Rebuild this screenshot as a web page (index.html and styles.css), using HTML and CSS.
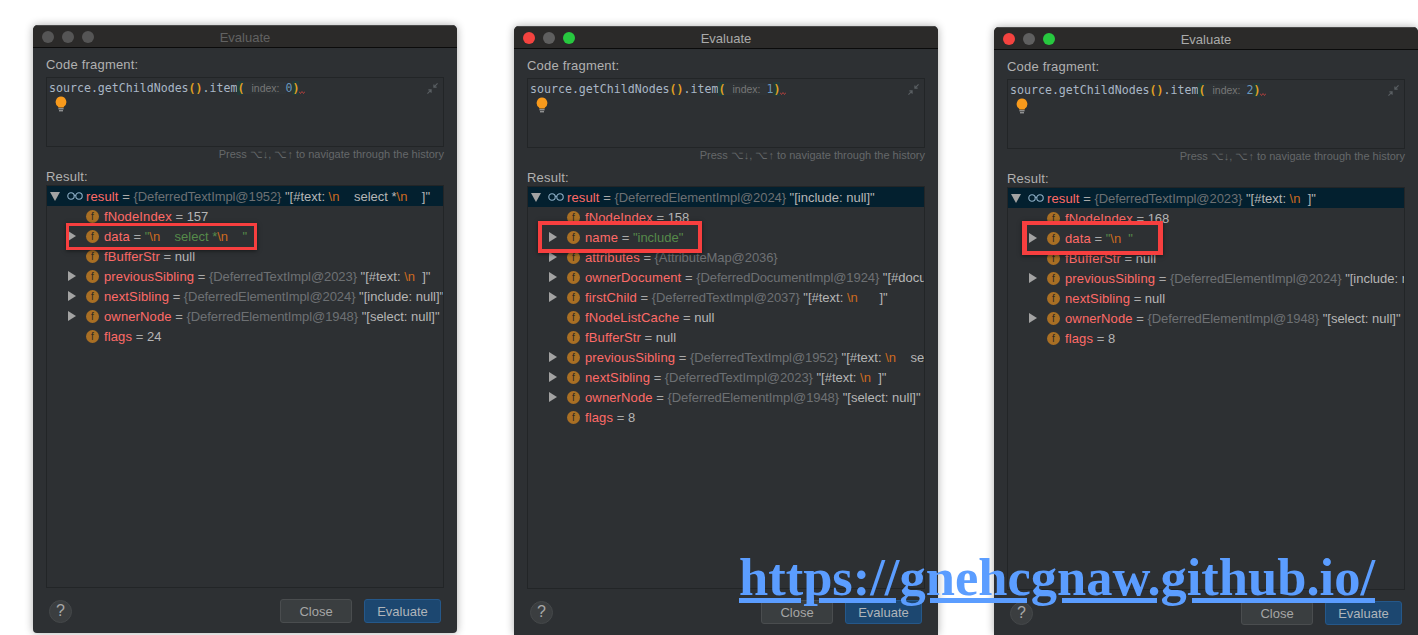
FILE: index.html
```html
<!DOCTYPE html>
<html lang="en">
<head>
<meta charset="utf-8">
<title>Evaluate</title>
<link rel="stylesheet" href="styles.css">
</head>
<body>
<svg class="defs" width="0" height="0" aria-hidden="true">
  <defs>
    <symbol id="bulb" viewBox="0 0 12 16"><path d="M6 0.500a5.500 5.500 0 0 0-3 10l.4 1h5.200l.4-1a5.500 5.500 0 0 0-3-10z" fill="#f89a1c"/><path d="M3.400 12.800h5.200M4 14.800h4" stroke="#b9b9b9" stroke-width="1" fill="none"/></symbol>
    <symbol id="collapse" viewBox="0 0 12 12"><path d="M11.500 0.500 7.500 4.500M7.500 1.500v3h3M0.500 11.500l4-4M1.500 7.500h3v3" stroke="#5a5f63" stroke-width="1.200" fill="none"/></symbol>
    <symbol id="squig" viewBox="0 0 6 3"><path d="M0 0.500l1.500 2 1.500-2 1.500 2 1.500-2" stroke="#c9423f" stroke-width="0.800" fill="none"/></symbol>
    <symbol id="glasses" viewBox="0 0 16 8"><circle cx="4" cy="4" r="3.200" fill="none" stroke="#8fb0c8" stroke-width="1.100"/><circle cx="12" cy="4" r="3.200" fill="none" stroke="#8fb0c8" stroke-width="1.100"/><path d="M7 3.500q1-.8 2 0" stroke="#8fb0c8" fill="none"/></symbol>
  </defs>
</svg>

<section class="window window-a inactive">
  <header class="titlebar"><div class="lights"><i class="light"></i><i class="light"></i><i class="light"></i></div><h1 class="title">Evaluate</h1></header>
  <div class="content">
    <label class="label">Code fragment:</label>
    <div class="editor">
      <div class="code">source.getChildNodes<b class="paren">()</b>.item<b class="paren hl">(</b><span class="hint">index:</span><span class="num">0</span><b class="paren hl">)</b><svg class="squig"><use href="#squig"/></svg></div>
      <svg class="bulb"><use href="#bulb"/></svg>
      <svg class="collapse"><use href="#collapse"/></svg>
    </div>
    <p class="history">Press ⌥↓, ⌥↑ to navigate through the history</p>
    <label class="label result-label">Result:</label>
    <div class="tree">
      <div class="row root"><i class="arrow down"></i><svg class="glasses"><use href="#glasses"/></svg><span class="n">result</span><span class="e"> = </span><span class="t">{DeferredTextImpl@1952}</span><span class="v"> "[#text: <span class="esc">\n</span>    select *<span class="esc">\n</span>    ]"</span></div>
      <div class="row"><i class="arrow none"></i><i class="f">f</i><span class="n">fNodeIndex</span><span class="e"> = </span><span class="v">157</span></div>
      <div class="row"><i class="arrow"></i><i class="f">f</i><span class="n">data</span><span class="e"> = </span><span class="s">"<span class="esc">\n</span>    select *<span class="esc">\n</span>    "</span></div>
      <div class="row"><i class="arrow none"></i><i class="f">f</i><span class="n">fBufferStr</span><span class="e"> = </span><span class="v">null</span></div>
      <div class="row"><i class="arrow"></i><i class="f">f</i><span class="n">previousSibling</span><span class="e"> = </span><span class="t">{DeferredTextImpl@2023}</span><span class="v"> "[#text: <span class="esc">\n</span>  ]"</span></div>
      <div class="row"><i class="arrow"></i><i class="f">f</i><span class="n">nextSibling</span><span class="e"> = </span><span class="t">{DeferredElementImpl@2024}</span><span class="v"> "[include: null]"</span></div>
      <div class="row"><i class="arrow"></i><i class="f">f</i><span class="n">ownerNode</span><span class="e"> = </span><span class="t">{DeferredElementImpl@1948}</span><span class="v"> "[select: null]"</span></div>
      <div class="row"><i class="arrow none"></i><i class="f">f</i><span class="n">flags</span><span class="e"> = </span><span class="v">24</span></div>
    </div>
    <footer class="actions"><button class="help">?</button><button class="btn close">Close</button><button class="btn primary">Evaluate</button></footer>
  </div>
  <div class="mark mark-a"></div>
</section>

<section class="window window-b">
  <header class="titlebar"><div class="lights"><i class="light red"></i><i class="light"></i><i class="light green"></i></div><h1 class="title">Evaluate</h1></header>
  <div class="content">
    <label class="label">Code fragment:</label>
    <div class="editor">
      <div class="code">source.getChildNodes<b class="paren">()</b>.item<b class="paren hl">(</b><span class="hint">index:</span><span class="num">1</span><b class="paren hl">)</b><svg class="squig"><use href="#squig"/></svg></div>
      <svg class="bulb"><use href="#bulb"/></svg>
      <svg class="collapse"><use href="#collapse"/></svg>
    </div>
    <p class="history">Press ⌥↓, ⌥↑ to navigate through the history</p>
    <label class="label result-label">Result:</label>
    <div class="tree">
      <div class="row root"><i class="arrow down"></i><svg class="glasses"><use href="#glasses"/></svg><span class="n">result</span><span class="e"> = </span><span class="t">{DeferredElementImpl@2024}</span><span class="v"> "[include: null]"</span></div>
      <div class="row"><i class="arrow none"></i><i class="f">f</i><span class="n">fNodeIndex</span><span class="e"> = </span><span class="v">158</span></div>
      <div class="row"><i class="arrow"></i><i class="f">f</i><span class="n">name</span><span class="e"> = </span><span class="s">"include"</span></div>
      <div class="row"><i class="arrow"></i><i class="f">f</i><span class="n">attributes</span><span class="e"> = </span><span class="t">{AttributeMap@2036}</span></div>
      <div class="row"><i class="arrow"></i><i class="f">f</i><span class="n">ownerDocument</span><span class="e"> = </span><span class="t">{DeferredDocumentImpl@1924}</span><span class="v"> "[#document: null]"</span></div>
      <div class="row"><i class="arrow"></i><i class="f">f</i><span class="n">firstChild</span><span class="e"> = </span><span class="t">{DeferredTextImpl@2037}</span><span class="v"> "[#text: <span class="esc">\n</span>      ]"</span></div>
      <div class="row"><i class="arrow none"></i><i class="f">f</i><span class="n">fNodeListCache</span><span class="e"> = </span><span class="v">null</span></div>
      <div class="row"><i class="arrow none"></i><i class="f">f</i><span class="n">fBufferStr</span><span class="e"> = </span><span class="v">null</span></div>
      <div class="row"><i class="arrow"></i><i class="f">f</i><span class="n">previousSibling</span><span class="e"> = </span><span class="t">{DeferredTextImpl@1952}</span><span class="v"> "[#text: <span class="esc">\n</span>    select *]"</span></div>
      <div class="row"><i class="arrow"></i><i class="f">f</i><span class="n">nextSibling</span><span class="e"> = </span><span class="t">{DeferredTextImpl@2023}</span><span class="v"> "[#text: <span class="esc">\n</span>  ]"</span></div>
      <div class="row"><i class="arrow"></i><i class="f">f</i><span class="n">ownerNode</span><span class="e"> = </span><span class="t">{DeferredElementImpl@1948}</span><span class="v"> "[select: null]"</span></div>
      <div class="row"><i class="arrow none"></i><i class="f">f</i><span class="n">flags</span><span class="e"> = </span><span class="v">8</span></div>
    </div>
    <footer class="actions"><button class="help">?</button><button class="btn close">Close</button><button class="btn primary">Evaluate</button></footer>
  </div>
  <div class="mark mark-b"></div>
</section>

<section class="window window-c">
  <header class="titlebar"><div class="lights"><i class="light red"></i><i class="light"></i><i class="light green"></i></div><h1 class="title">Evaluate</h1></header>
  <div class="content">
    <label class="label">Code fragment:</label>
    <div class="editor">
      <div class="code">source.getChildNodes<b class="paren">()</b>.item<b class="paren hl">(</b><span class="hint">index:</span><span class="num">2</span><b class="paren hl">)</b><svg class="squig"><use href="#squig"/></svg></div>
      <svg class="bulb"><use href="#bulb"/></svg>
      <svg class="collapse"><use href="#collapse"/></svg>
    </div>
    <p class="history">Press ⌥↓, ⌥↑ to navigate through the history</p>
    <label class="label result-label">Result:</label>
    <div class="tree">
      <div class="row root"><i class="arrow down"></i><svg class="glasses"><use href="#glasses"/></svg><span class="n">result</span><span class="e"> = </span><span class="t">{DeferredTextImpl@2023}</span><span class="v"> "[#text: <span class="esc">\n</span>  ]"</span></div>
      <div class="row"><i class="arrow none"></i><i class="f">f</i><span class="n">fNodeIndex</span><span class="e"> = </span><span class="v">168</span></div>
      <div class="row"><i class="arrow"></i><i class="f">f</i><span class="n">data</span><span class="e"> = </span><span class="s">"<span class="esc">\n</span>  "</span></div>
      <div class="row"><i class="arrow none"></i><i class="f">f</i><span class="n">fBufferStr</span><span class="e"> = </span><span class="v">null</span></div>
      <div class="row"><i class="arrow"></i><i class="f">f</i><span class="n">previousSibling</span><span class="e"> = </span><span class="t">{DeferredElementImpl@2024}</span><span class="v"> "[include: null]"</span></div>
      <div class="row"><i class="arrow none"></i><i class="f">f</i><span class="n">nextSibling</span><span class="e"> = </span><span class="v">null</span></div>
      <div class="row"><i class="arrow"></i><i class="f">f</i><span class="n">ownerNode</span><span class="e"> = </span><span class="t">{DeferredElementImpl@1948}</span><span class="v"> "[select: null]"</span></div>
      <div class="row"><i class="arrow none"></i><i class="f">f</i><span class="n">flags</span><span class="e"> = </span><span class="v">8</span></div>
    </div>
    <footer class="actions"><button class="help">?</button><button class="btn close">Close</button><button class="btn primary">Evaluate</button></footer>
  </div>
  <div class="mark mark-c"></div>
</section>

<a class="watermark" href="#">https://gnehcgnaw.github.io/</a>
</body>
</html>
```
FILE: styles.css
```css
* { box-sizing: border-box; }
html, body { margin: 0; height: 100%; }
body { position: relative; width: 1418px; height: 635px; overflow: hidden; background: #fff; font-family: "Liberation Sans", Arial, sans-serif; }
.defs { position: absolute; }

.window { position: absolute; width: 424px; background: #2d3033; border-radius: 5px 5px 0 0; box-shadow: 0 0 9px rgba(0,0,0,.32); overflow: hidden; }
.window-a { left: 33px; top: 25px; height: 608px; border-radius: 5px 5px 4px 4px; }
.window-b { left: 514px; top: 26px; height: 609px; }
.window-c { left: 994px; top: 27px; height: 608px; }

.titlebar { position: relative; height: 23px; padding-top: 1px; display: flex; align-items: center; justify-content: center; background: #2b2a29; border-top: 1px solid #4a4a4a; border-bottom: 1px solid #0b0b0b; }
.lights { position: absolute; left: 9px; top: 5px; display: flex; gap: 8px; }
.light { width: 12px; height: 12px; border-radius: 50%; background: #5f5f5f; }
.inactive .light { background: #555; }
.light.red { background: #f4433f; }
.light.green { background: #27c83f; }
.title { margin: 0; font-size: 13px; font-weight: 400; color: #aaa; }
.inactive .title { color: #626262; }

.content { padding: 7px 13px 0; display: flex; flex-direction: column; }
.label { display: block; height: 19px; line-height: 19px; font-size: 13px; letter-spacing: .2px; color: #b1b1b1; }
.editor { position: relative; height: 70px; margin-top: 3px; border: 1px solid #222527; padding: 2px 2px; }
.code { display: flex; align-items: center; height: 16px; font-family: "DejaVu Sans Mono", monospace; font-size: 11.6px; color: #a9b7c6; white-space: pre; }
.paren { color: #e0a022; font-weight: 700; }
.paren.hl { background: #213a3a; }
.hint { padding: 0 6px 0 7px; font-family: "Liberation Sans", sans-serif; font-size: 10.5px; color: #777; background: #2f3336; }
.num { color: #6897bb; }
.squig { width: 6px; height: 3px; margin-top: 9px; }
.bulb { position: absolute; left: 8px; top: 18px; width: 12px; height: 16px; }
.collapse { position: absolute; right: 5px; top: 5px; width: 11px; height: 11px; }
.history { margin: 0; height: 14px; line-height: 14px; text-align: right; font-size: 11px; color: #65686a; }
.result-label { margin-top: 6px; height: 18px; }

.tree { height: 403px; border: 1px solid #222527; overflow: hidden; font-size: 13px; }
.row { display: flex; align-items: center; height: 20px; padding-left: 21px; white-space: pre; color: #b6b6b6; }
.row.root { padding-left: 3px; background: #03202f; }
.arrow { flex: none; width: 18px; height: 10px; }
.arrow::before { content: ""; display: block; width: 0; height: 0; border-left: 8px solid #a3a3a3; border-top: 5px solid transparent; border-bottom: 5px solid transparent; }
.arrow.none::before { display: none; }
.arrow.down { width: 17px; }
.arrow.down::before { margin-top: 1px; border-top: 9px solid #a3a3a3; border-left: 5px solid transparent; border-right: 5px solid transparent; border-bottom: 0; }
.glasses { flex: none; width: 16px; height: 8px; margin-right: 3px; }
.f { flex: none; width: 13px; height: 13px; margin-right: 5px; border-radius: 50%; background: #a96f24; color: #2d2a25; font: 400 10px/13px "Liberation Sans", sans-serif; text-align: center; }
.n { color: #ff6b68; letter-spacing: .13px; }
.e { color: #aaa; }
.t { color: #6d7073; letter-spacing: -.08px; }
.v { color: #b6b6b6; }
.s { color: #568a4a; }
.esc { color: #cc6a20; }

.actions { display: flex; align-items: center; height: 24px; margin-top: 11px; }
.help { width: 23px; height: 23px; margin-left: 3px; padding: 0; border-radius: 50%; border: 1px solid #45484a; background: #3b3e40; color: #a8a8a8; font: 400 16px "Liberation Sans", sans-serif; }
.btn { height: 24px; padding: 0; border-radius: 3px; font: 13px "Liberation Sans", sans-serif; color: #a6a6a6; }
.close { width: 72px; margin-left: auto; background: #3a3e40; border: 1px solid #4a4d4f; }
.primary { width: 77px; margin: 0 3px 0 12px; background: #1c4770; border: 1px solid #25588a; color: #b0b5ba; }

.mark { position: absolute; border: 3px solid #f73f3f; box-shadow: 0 1px 4px rgba(0,0,0,.5); }
.mark-a { left: 33px; top: 198px; width: 191px; height: 27px; }
.mark-b { left: 24px; top: 195px; width: 164px; height: 32px; border-width: 4px; }
.mark-c { left: 28px; top: 194px; width: 141px; height: 34px; border-width: 4px 5px; }

.watermark { position: absolute; left: 739px; top: 547px; font: 700 52.5px/60px "Liberation Serif", "Times New Roman", serif; color: #5b9dff; white-space: nowrap; }
```
